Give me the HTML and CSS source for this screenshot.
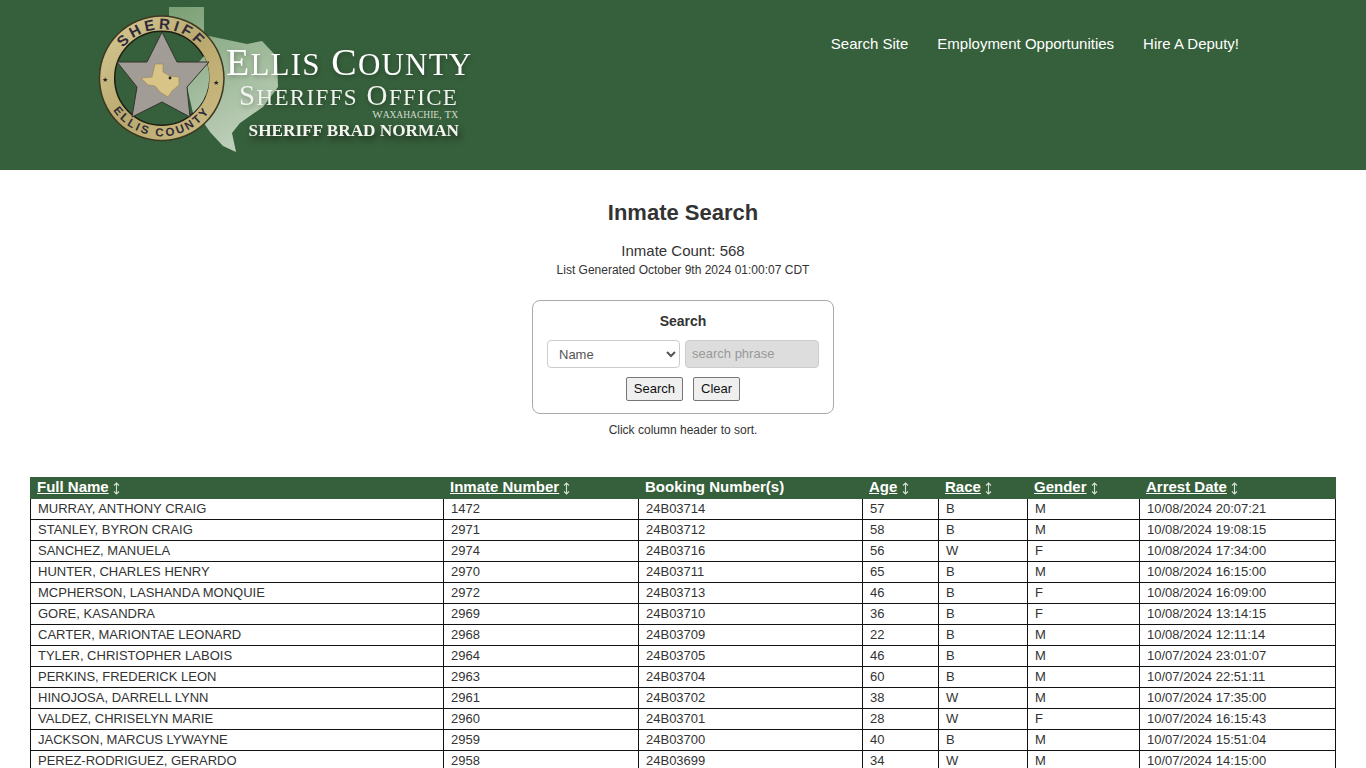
FILE: index.html
```html
<!DOCTYPE html>
<html lang="en">
<head>
    <meta charset="UTF-8">
    <meta name="viewport" content="width=device-width, initial-scale=1.0">
    <title>Inmate Search</title>
    <link rel="stylesheet" href="styles.css">
</head>
<body>
    <svg class="icon-defs" width="0" height="0">
        <symbol id="sort-icon" viewBox="0 0 7 13">
            <path d="M3.5 1 V12 M1 3.5 L3.5 1 L6 3.5 M1 9.5 L3.5 12 L6 9.5" fill="none" stroke="#d5e2d3" stroke-width="1.1"/>
        </symbol>
    </svg>

    <header class="site-header">
        <a class="logo" href="#">
            <svg width="400" height="170" viewBox="0 0 400 170">
                <defs>
                    <linearGradient id="ring" x1="0" y1="0" x2="1" y2="1">
                        <stop offset="0" stop-color="#d9cb97"/>
                        <stop offset="0.5" stop-color="#b9a96e"/>
                        <stop offset="1" stop-color="#cdbd84"/>
                    </linearGradient>
                    <linearGradient id="texas" gradientUnits="userSpaceOnUse" x1="90" y1="5" x2="170" y2="155">
                        <stop offset="0" stop-color="#7a9f74"/>
                        <stop offset="1" stop-color="#c4d4c0"/>
                    </linearGradient>
                    <path id="arc-top" d="M32.7 78.3 A49 49 0 1 1 130.7 78.3"/>
                    <path id="arc-bottom" d="M23.7 78.3 A58 58 0 0 0 139.7 78.3"/>
                </defs>
                <path class="tx-shape" d="M89 7 H124 V35 L143 39 L167 44 L182 41 L197 57 L198 87 L183 107 L160 123 L152 133 L156 152 L143 146 L130 132 L113 107 L89 100 Z"/>
                <circle cx="81.7" cy="78.3" r="63" fill="#3d3820"/>
                <circle cx="81.7" cy="78.3" r="61.5" fill="url(#ring)"/>
                <circle cx="81.7" cy="78.3" r="47" fill="#365f3b" stroke="#1f1d12" stroke-width="1.5"/>
                <path class="tx-shape" d="M124 56 A47 47 0 0 1 113 113 L105 78 Z"/>
                <polygon points="82,32 97,62 129,62 107,87 110,117 82,102 52,117 57,87 37,62 67,62" fill="#a19d96" stroke="#33332c" stroke-width="1"/>
                <path d="M75 64 H83 V72 L90 76 L99 77 L99 85 L92 91 L88 97 L80 92 L75 86 L68 85 L61 78 L72 77 Z" fill="#d9c487" stroke="#8c7c48" stroke-width="0.5"/>
                <circle cx="90" cy="78" r="1.4" fill="#222"/>
                <text class="badge-text" font-size="15" letter-spacing="3.5"><textPath href="#arc-top" startOffset="50%" text-anchor="middle">SHERIFF</textPath></text>
                <text class="badge-text" font-size="11.5" letter-spacing="2.5"><textPath href="#arc-bottom" startOffset="50%" text-anchor="middle">ELLIS COUNTY</textPath></text>
                <text class="badge-star" x="22" y="82" font-size="7">★</text>
                <text class="badge-star" x="133" y="85" font-size="7">★</text>
                <text class="logo-line" x="146" y="75" font-size="38" letter-spacing="1.2">E<tspan font-size="31">LLIS</tspan> C<tspan font-size="31">OUNTY</tspan></text>
                <text class="logo-line faded" x="159" y="105" font-size="29" letter-spacing="1.35">S<tspan font-size="23">HERIFFS</tspan> O<tspan font-size="23">FFICE</tspan></text>
                <text class="logo-small" x="378" y="118" font-size="11" text-anchor="end">W<tspan font-size="9.5">AXAHACHIE</tspan>, T<tspan font-size="9.5">X</tspan></text>
                <text class="logo-name" x="379" y="136" font-size="17.2" text-anchor="end">SHERIFF BRAD NORMAN</text>
            </svg>
        </a>
        <nav class="main-nav">
            <a href="#">Search Site</a>
            <a href="#">Employment Opportunities</a>
            <a href="#">Hire A Deputy!</a>
        </nav>
    </header>

    <main>
        <h1>Inmate Search</h1>
        <div class="count">Inmate Count: 568</div>
        <div class="generated">List Generated October 9th 2024 01:00:07 CDT</div>

        <form class="search-box">
            <div class="search-title">Search</div>
            <div class="search-fields">
                <select class="search-select">
                    <option>Name</option>
                </select>
                <input class="search-input" type="text" placeholder="search phrase" disabled>
            </div>
            <div class="search-buttons">
                <button type="button">Search</button>
                <button type="button">Clear</button>
            </div>
        </form>
        <div class="sort-hint">Click column header to sort.</div>

        <table class="inmates">
            <colgroup>
                <col class="col-name">
                <col class="col-inmate">
                <col class="col-booking">
                <col class="col-age">
                <col class="col-race">
                <col class="col-gender">
                <col class="col-date">
            </colgroup>
            <thead>
                <tr>
                    <th><a href="#">Full Name</a> <svg class="sort-arrow"><use href="#sort-icon"/></svg></th>
                    <th><a href="#">Inmate Number</a> <svg class="sort-arrow"><use href="#sort-icon"/></svg></th>
                    <th>Booking Number(s)</th>
                    <th><a href="#">Age</a> <svg class="sort-arrow"><use href="#sort-icon"/></svg></th>
                    <th><a href="#">Race</a> <svg class="sort-arrow"><use href="#sort-icon"/></svg></th>
                    <th><a href="#">Gender</a> <svg class="sort-arrow"><use href="#sort-icon"/></svg></th>
                    <th><a href="#">Arrest Date</a> <svg class="sort-arrow"><use href="#sort-icon"/></svg></th>
                </tr>
            </thead>
            <tbody>
                <tr><td>MURRAY, ANTHONY CRAIG</td><td>1472</td><td>24B03714</td><td>57</td><td>B</td><td>M</td><td>10/08/2024 20:07:21</td></tr>
                <tr><td>STANLEY, BYRON CRAIG</td><td>2971</td><td>24B03712</td><td>58</td><td>B</td><td>M</td><td>10/08/2024 19:08:15</td></tr>
                <tr><td>SANCHEZ, MANUELA</td><td>2974</td><td>24B03716</td><td>56</td><td>W</td><td>F</td><td>10/08/2024 17:34:00</td></tr>
                <tr><td>HUNTER, CHARLES HENRY</td><td>2970</td><td>24B03711</td><td>65</td><td>B</td><td>M</td><td>10/08/2024 16:15:00</td></tr>
                <tr><td>MCPHERSON, LASHANDA MONQUIE</td><td>2972</td><td>24B03713</td><td>46</td><td>B</td><td>F</td><td>10/08/2024 16:09:00</td></tr>
                <tr><td>GORE, KASANDRA</td><td>2969</td><td>24B03710</td><td>36</td><td>B</td><td>F</td><td>10/08/2024 13:14:15</td></tr>
                <tr><td>CARTER, MARIONTAE LEONARD</td><td>2968</td><td>24B03709</td><td>22</td><td>B</td><td>M</td><td>10/08/2024 12:11:14</td></tr>
                <tr><td>TYLER, CHRISTOPHER LABOIS</td><td>2964</td><td>24B03705</td><td>46</td><td>B</td><td>M</td><td>10/07/2024 23:01:07</td></tr>
                <tr><td>PERKINS, FREDERICK LEON</td><td>2963</td><td>24B03704</td><td>60</td><td>B</td><td>M</td><td>10/07/2024 22:51:11</td></tr>
                <tr><td>HINOJOSA, DARRELL LYNN</td><td>2961</td><td>24B03702</td><td>38</td><td>W</td><td>M</td><td>10/07/2024 17:35:00</td></tr>
                <tr><td>VALDEZ, CHRISELYN MARIE</td><td>2960</td><td>24B03701</td><td>28</td><td>W</td><td>F</td><td>10/07/2024 16:15:43</td></tr>
                <tr><td>JACKSON, MARCUS LYWAYNE</td><td>2959</td><td>24B03700</td><td>40</td><td>B</td><td>M</td><td>10/07/2024 15:51:04</td></tr>
                <tr><td>PEREZ-RODRIGUEZ, GERARDO</td><td>2958</td><td>24B03699</td><td>34</td><td>W</td><td>M</td><td>10/07/2024 14:15:00</td></tr>
            </tbody>
        </table>
    </main>
</body>
</html>
```

FILE: styles.css
```css
html, body {
    height: 768px;
    overflow: hidden;
}

body {
    margin: 0;
    font-family: 'Liberation Sans', Arial, sans-serif;
    color: #333;
    background: #fff;
}

.icon-defs {
    display: block;
}

.site-header {
    display: flex;
    justify-content: space-between;
    height: 170px;
    padding: 0 127px 0 80px;
    background: #365f3b;
}

.logo {
    display: block;
    height: 170px;
}

.logo svg {
    display: block;
}

.tx-shape {
    fill: url(#texas);
}

.badge-text {
    font-family: 'Liberation Sans', sans-serif;
    font-weight: bold;
    fill: #2e2a3a;
}

.badge-star {
    fill: #222;
}

.logo-line {
    font-family: 'Liberation Serif', serif;
    fill: #fff;
    filter: drop-shadow(1px 2px 2px rgba(0, 0, 0, 0.25));
}

.logo-line.faded {
    fill: #f0f3ee;
}

.logo-small {
    font-family: 'Liberation Serif', serif;
    fill: #d4dcd0;
}

.logo-name {
    font-family: 'Liberation Serif', serif;
    font-weight: bold;
    fill: #f5f5f0;
    filter: drop-shadow(2px 4px 3px rgba(0, 0, 0, 0.5));
}

.main-nav {
    display: flex;
    gap: 29px;
    padding-top: 35px;
    font-size: 15px;
}

.main-nav a {
    color: #fff;
    text-decoration: none;
}

main {
    display: flex;
    flex-direction: column;
    align-items: center;
}

h1 {
    margin: 30px 0 0;
    font-size: 22px;
    line-height: 26px;
    font-weight: bold;
}

.count {
    margin-top: 16px;
    font-size: 15px;
    line-height: 18px;
}

.generated {
    margin-top: 3px;
    font-size: 12px;
    line-height: 14px;
}

.search-box {
    box-sizing: border-box;
    width: 302px;
    height: 114px;
    margin-top: 23px;
    padding: 12px 14px 0;
    border: 1px solid #aaa;
    border-radius: 8px;
    text-align: center;
}

.search-title {
    font-size: 14px;
    font-weight: bold;
    line-height: 16px;
}

.search-fields {
    display: flex;
    gap: 5px;
    margin-top: 11px;
}

.search-select,
.search-input {
    box-sizing: border-box;
    height: 28px;
    border: 1px solid #ccc;
    border-radius: 4px;
    font-family: inherit;
    font-size: 13px;
}

.search-select {
    width: 133px;
    padding-left: 7px;
    color: #555;
    background: #fff;
}

.search-input {
    width: 134px;
    padding: 0 6px 2px;
    background: #ddd;
}

.search-input::placeholder {
    color: #999;
}

.search-buttons {
    display: flex;
    justify-content: center;
    gap: 10px;
    margin-top: 9px;
}

.search-buttons button {
    box-sizing: border-box;
    height: 24px;
    padding: 0 7px 2px;
    border: 1px solid #767676;
    border-radius: 2px;
    background: #efefef;
    color: #111;
    font-family: inherit;
    font-size: 13px;
}

.sort-hint {
    margin-top: 9px;
    font-size: 12px;
    line-height: 14px;
}

.inmates {
    width: 1305px;
    margin-top: 40px;
    border-collapse: collapse;
    table-layout: fixed;
    font-size: 13px;
}

.col-name { width: 413px; }
.col-inmate { width: 195px; }
.col-booking { width: 224px; }
.col-age { width: 76px; }
.col-race { width: 89px; }
.col-gender { width: 112px; }
.col-date { width: 196px; }

.inmates th {
    height: 18px;
    padding: 0 6px 2px;
    border: 1px solid #365f3b;
    background: #365f3b;
    color: #fff;
    font-size: 15px;
    line-height: 18px;
    text-align: left;
}

.inmates th a {
    color: #fff;
}

.sort-arrow {
    width: 7px;
    height: 13px;
    vertical-align: -3px;
}

.inmates td {
    height: 20px;
    padding: 0 7px;
    border: 1px solid #111;
    line-height: 16px;
    white-space: nowrap;
}
```
